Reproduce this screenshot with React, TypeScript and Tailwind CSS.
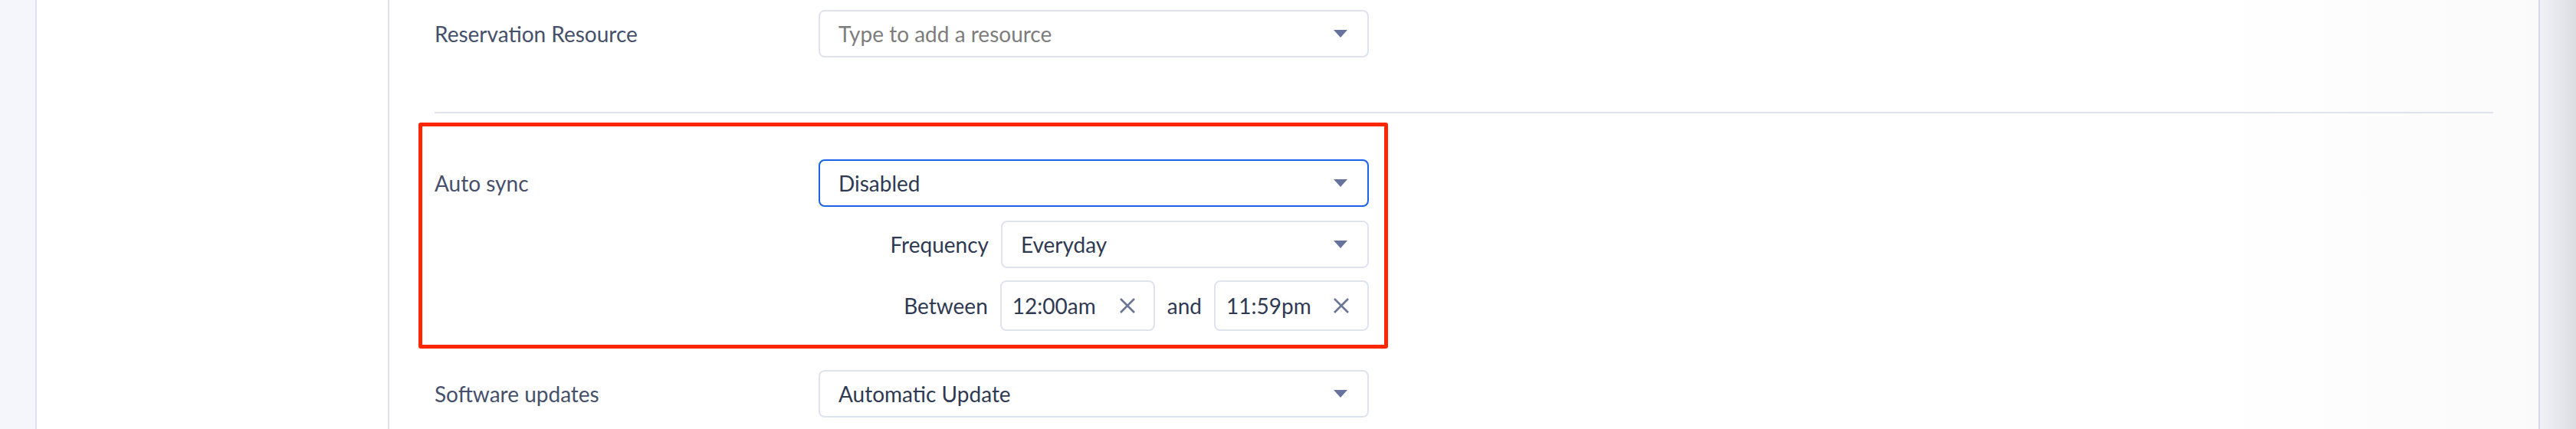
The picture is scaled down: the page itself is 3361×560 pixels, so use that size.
import React from "react";

const Arrow = () => (
  <svg width="18" height="10" viewBox="0 0 18 10" className="shrink-0">
    <path d="M0 0 H18 L9 10 Z" fill="#67739f" />
  </svg>
);

const XIcon = () => (
  <svg width="22" height="20" viewBox="0 0 22 20" className="shrink-0">
    <path d="M2 1 L20 19 M20 1 L2 19" stroke="#6b7594" strokeWidth="2.6" fill="none" />
  </svg>
);

function Select({
  value,
  placeholder,
  width,
  focused,
}: {
  value?: string;
  placeholder?: string;
  width: string;
  focused?: boolean;
}) {
  return (
    <div
      className={`${width} flex h-[62px] items-center justify-between rounded-[8px] border-2 bg-white pl-[24px] pr-[26px] ${
        focused ? "border-[#1a62e8]" : "border-[#dfe3ee]"
      }`}
    >
      {value ? (
        <span className="text-[28px] leading-none text-[#2f3a52]">{value}</span>
      ) : (
        <span className="text-[28px] leading-none text-[#7d7d7d]">{placeholder}</span>
      )}
      <Arrow />
    </div>
  );
}

function TimeBox({ value }: { value: string }) {
  return (
    <div className="flex h-[66px] w-[202px] items-center justify-between rounded-[8px] border-2 border-[#dfe3ee] bg-white pl-[14px] pr-[23px]">
      <span className="text-[28px] leading-none text-[#2f3a52]">{value}</span>
      <XIcon />
    </div>
  );
}

export default function App() {
  return (
    <div className="flex h-[560px] w-full overflow-hidden bg-white font-['Lato',sans-serif]">
      <div className="w-[48px] shrink-0 border-r-2 border-[#dde2ee] bg-[#f5f6fb]" />
      <div className="w-[460px] shrink-0 border-r-2 border-[#dde2ee] bg-white" />
      <div className="flex-1 bg-[linear-gradient(to_right,#ffffff_85%,#fafafa)] px-[59px] pt-[13px]">
        <div className="flex items-center">
          <div className="w-[501px] text-[28px] leading-none text-[#46506a]">Reservation Resource</div>
          <Select placeholder="Type to add a resource" width="w-[718px]" />
        </div>

        <div className="mt-[71px] h-[2px] bg-[#dfe3ee]" />

        <div className="-ml-[21px] mt-[12px] w-[1265px] rounded-[3px] border-[5px] border-[#ff2600] pb-[18px] pl-[16px] pt-[43px]">
          <div className="flex items-center">
            <div className="w-[501px] text-[28px] leading-none text-[#46506a]">Auto sync</div>
            <Select value="Disabled" width="w-[718px]" focused />
          </div>
          <div className="ml-[501px] w-[718px]">
            <div className="mt-[18px] flex items-center justify-end gap-[16px]">
              <span className="text-[28px] leading-none text-[#2f3a52]">Frequency</span>
              <Select value="Everyday" width="w-[480px]" />
            </div>
            <div className="mt-[16px] flex items-center justify-end gap-[16px]">
              <span className="text-[28px] leading-none text-[#2f3a52]">Between</span>
              <TimeBox value="12:00am" />
              <span className="text-[28px] leading-none text-[#2f3a52]">and</span>
              <TimeBox value="11:59pm" />
            </div>
          </div>
        </div>

        <div className="mt-[28px] flex items-center">
          <div className="w-[501px] text-[28px] leading-none text-[#46506a]">Software updates</div>
          <Select value="Automatic Update" width="w-[718px]" />
        </div>
      </div>
      <div className="w-[49px] shrink-0 border-l-2 border-[#d5d9e6] bg-gradient-to-r from-[#f0f2f7] to-[#dcdde1]" />
    </div>
  );
}
